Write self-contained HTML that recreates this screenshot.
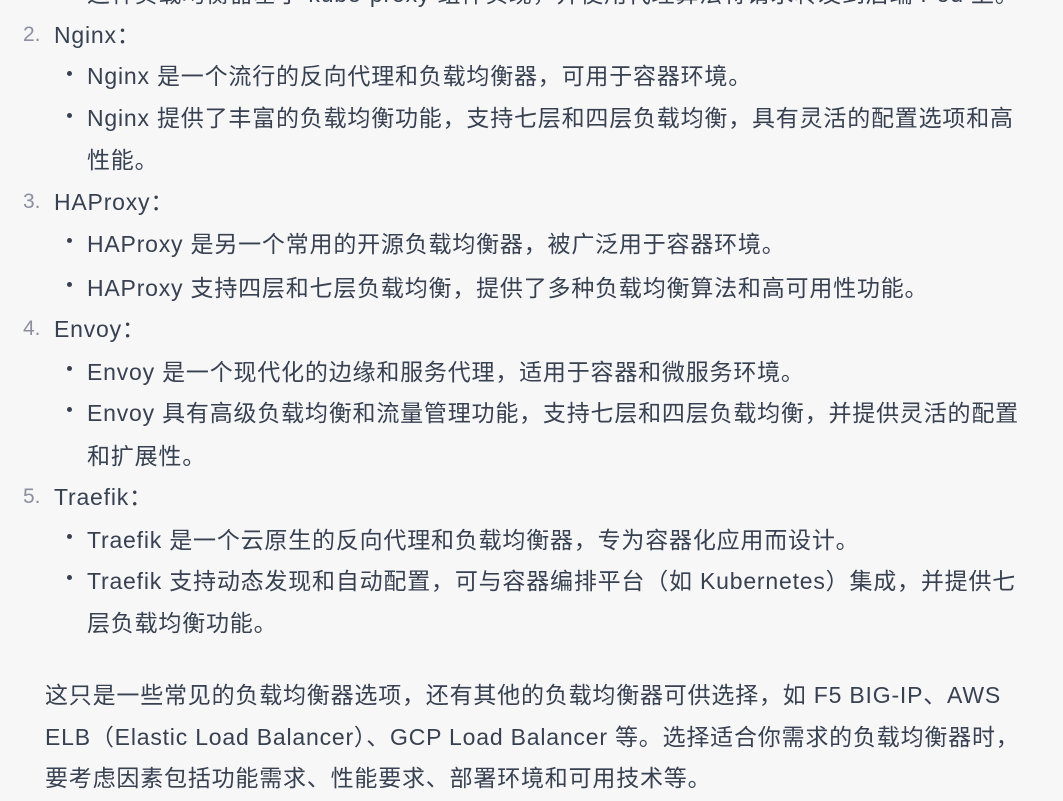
<!DOCTYPE html>
<html><head><meta charset="utf-8"><style>
html,body{margin:0;padding:0;background:#f7f7f8;width:1063px;height:801px;overflow:hidden}
body{position:relative;font-family:"Liberation Sans","Noto Sans CJK SC",sans-serif;font-size:23px;letter-spacing:0.8px;color:#374151}
.l{position:absolute;white-space:nowrap;line-height:30px}
.n{position:absolute;color:#8e8ea0;white-space:nowrap;line-height:30px;font-size:21px;letter-spacing:0}
.b{position:absolute;width:5px;height:5px;border-radius:50%;background:#374151}
</style></head><body>
<div class="l" style="left:87px;top:-21px">这种负载均衡器基于 kube-proxy 组件实现，并使用代理算法将请求转发到后端 Pod 上。</div>

<div class="n" style="left:23px;top:20px">2.</div><div class="l" style="left:54px;top:20px">Nginx：</div>
<div class="b" style="left:67px;top:71px"></div><div class="l" style="left:87px;top:61px">Nginx 是一个流行的反向代理和负载均衡器，可用于容器环境。</div>
<div class="b" style="left:67px;top:113px"></div><div class="l" style="left:87px;top:103px">Nginx 提供了丰富的负载均衡功能，支持七层和四层负载均衡，具有灵活的配置选项和高</div>
<div class="l" style="left:87px;top:145px">性能。</div>

<div class="n" style="left:23px;top:187px">3.</div><div class="l" style="left:54px;top:187px">HAProxy：</div>
<div class="b" style="left:67px;top:238px"></div><div class="l" style="left:87px;top:229px">HAProxy 是另一个常用的开源负载均衡器，被广泛用于容器环境。</div>
<div class="b" style="left:67px;top:282px"></div><div class="l" style="left:87px;top:273px">HAProxy 支持四层和七层负载均衡，提供了多种负载均衡算法和高可用性功能。</div>

<div class="n" style="left:23px;top:314px">4.</div><div class="l" style="left:54px;top:314px">Envoy：</div>
<div class="b" style="left:67px;top:366px"></div><div class="l" style="left:87px;top:357px">Envoy 是一个现代化的边缘和服务代理，适用于容器和微服务环境。</div>
<div class="b" style="left:67px;top:407px"></div><div class="l" style="left:87px;top:398px">Envoy 具有高级负载均衡和流量管理功能，支持七层和四层负载均衡，并提供灵活的配置</div>
<div class="l" style="left:87px;top:441px">和扩展性。</div>

<div class="n" style="left:23px;top:482px">5.</div><div class="l" style="left:54px;top:482px">Traefik：</div>
<div class="b" style="left:67px;top:534px"></div><div class="l" style="left:87px;top:525px">Traefik 是一个云原生的反向代理和负载均衡器，专为容器化应用而设计。</div>
<div class="b" style="left:67px;top:575px"></div><div class="l" style="left:87px;top:566px">Traefik 支持动态发现和自动配置，可与容器编排平台（如 Kubernetes）集成，并提供七</div>
<div class="l" style="left:87px;top:608px">层负载均衡功能。</div>

<div class="l" style="left:45px;top:680px">这只是一些常见的负载均衡器选项，还有其他的负载均衡器可供选择，如 F5 BIG-IP、AWS</div>
<div class="l" style="left:45px;top:722px">ELB（Elastic Load Balancer）、GCP Load Balancer 等。选择适合你需求的负载均衡器时，</div>
<div class="l" style="left:45px;top:763px">要考虑因素包括功能需求、性能要求、部署环境和可用技术等。</div>
</body></html>
